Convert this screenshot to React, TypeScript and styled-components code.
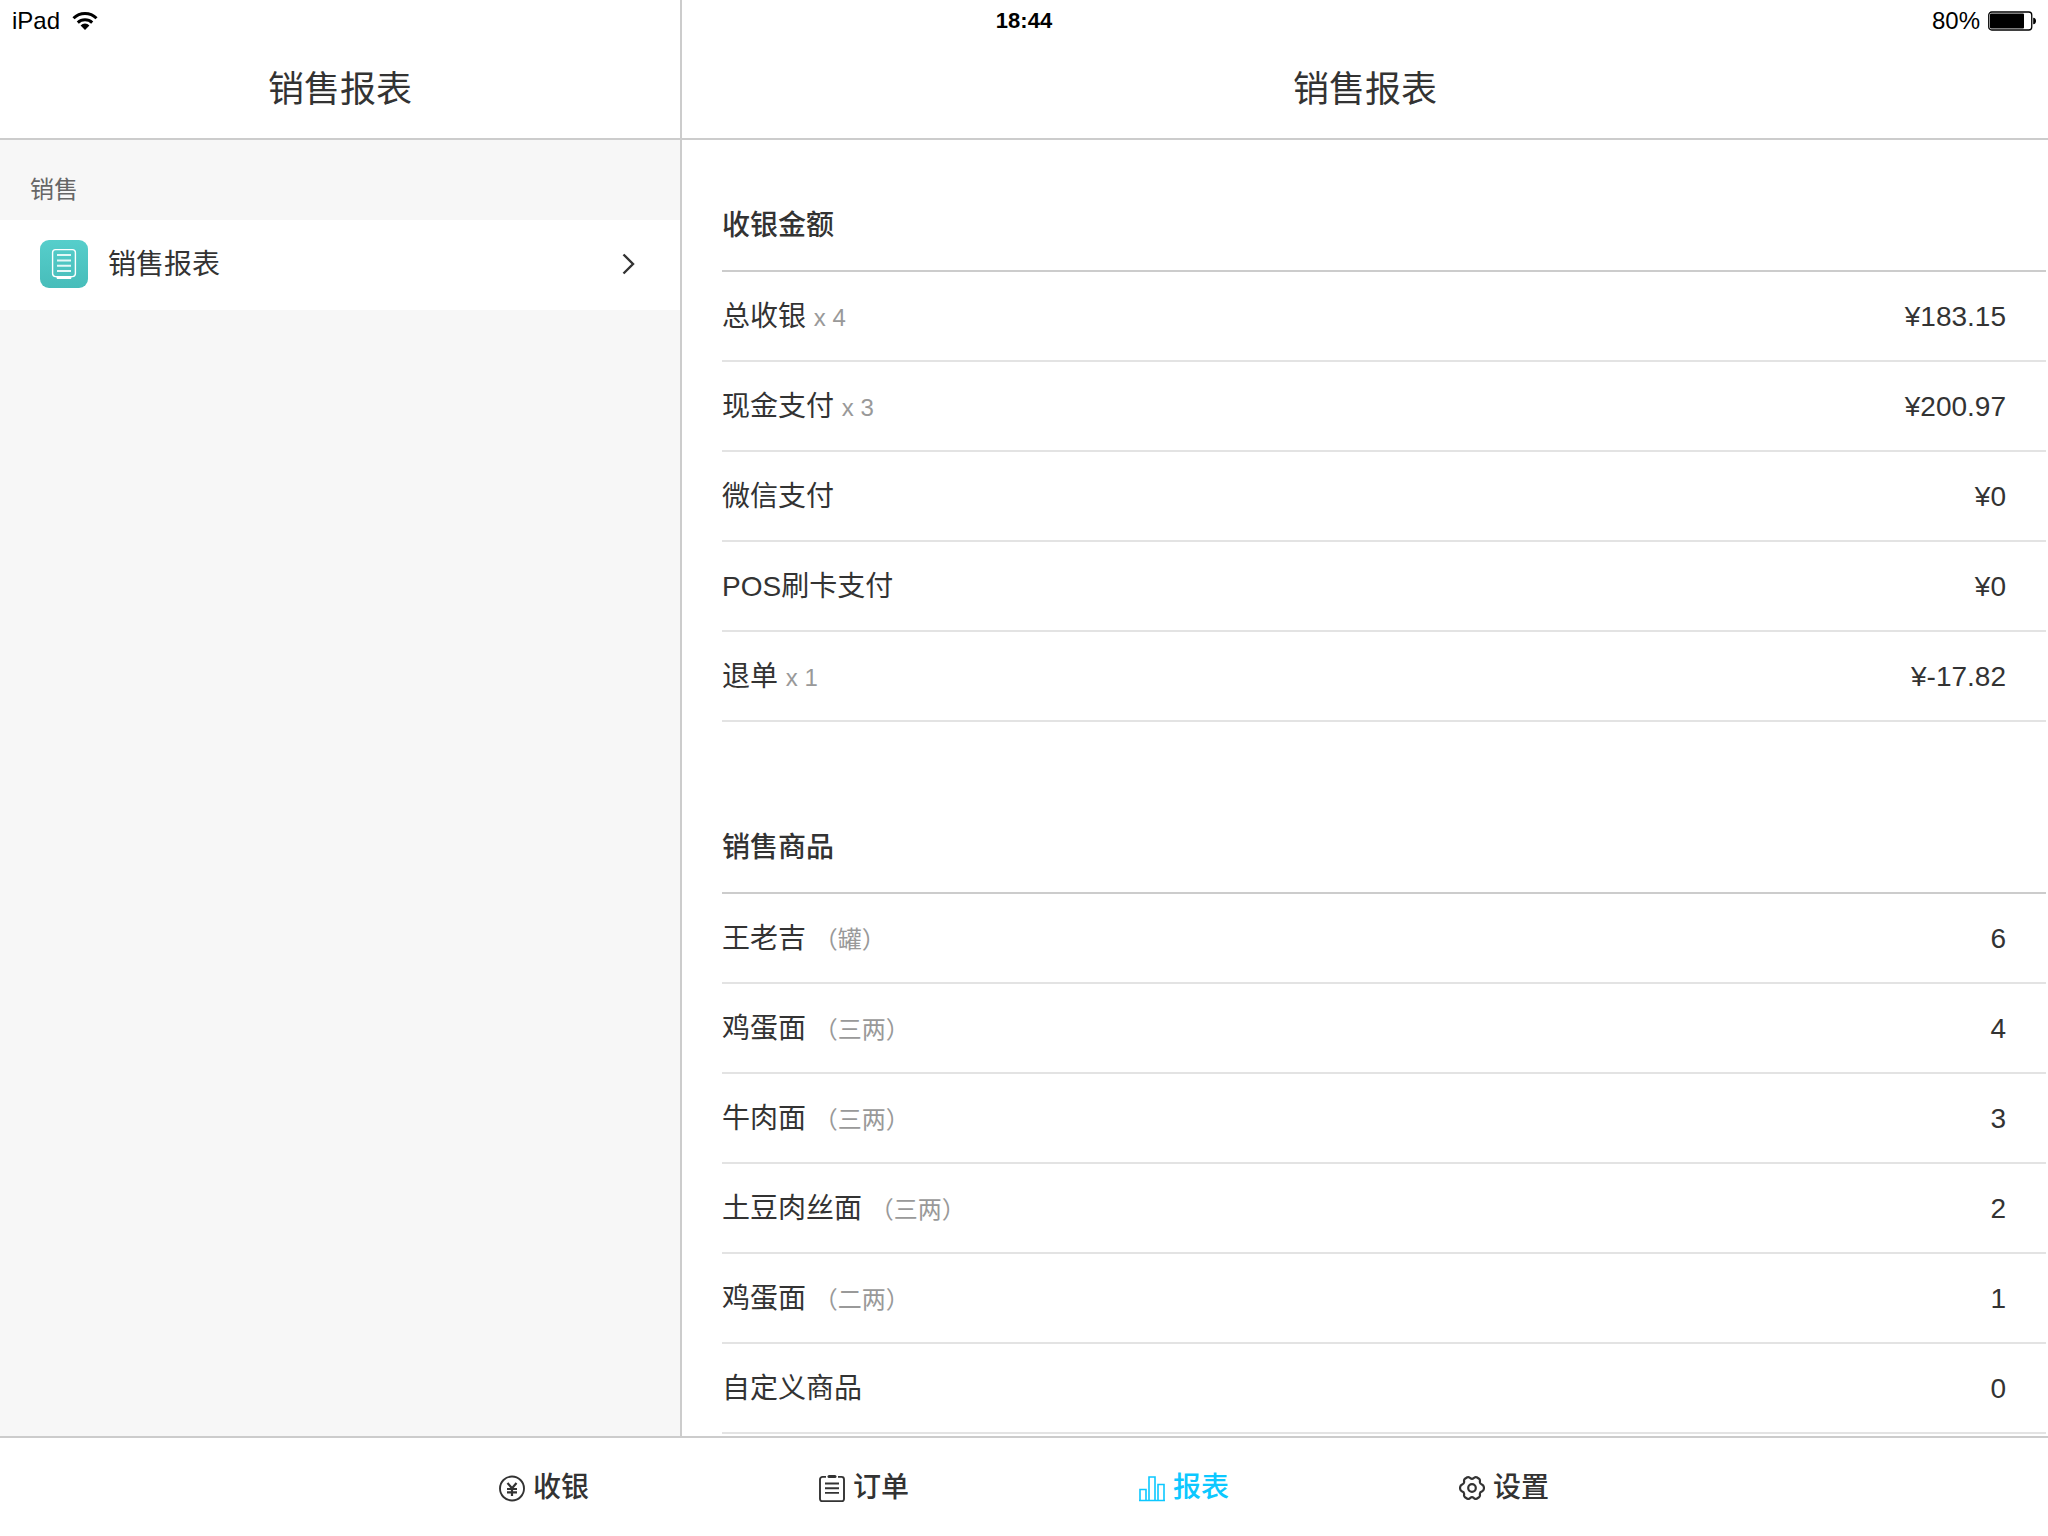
import React from "react";
import styled, { createGlobalStyle } from "styled-components";

const ink = "#333333";
const line = "#cccccc";
const softLine = "#e3e3e3";
const muted = "#999999";
const accent = "#0cc8ff";

const GlobalStyle = createGlobalStyle`
  * { box-sizing: border-box; }
  body {
    margin: 0;
    background: #ffffff;
    color: ${ink};
    font-family: "Liberation Sans", "Noto Sans CJK SC", sans-serif;
    font-size: 28px;
    line-height: 40px;
  }
`;

const Screen = styled.div`
  height: 100vh;
  display: flex;
  flex-direction: column;
  overflow: hidden;
`;

const Columns = styled.div`
  flex: 1;
  min-height: 0;
  display: grid;
  grid-template-columns: 682px minmax(0, 1fr);
`;

const StatusBar = styled.div`
  position: absolute;
  top: 0;
  left: 0;
  right: 0;
  height: 42px;
  padding: 0 12px;
  display: grid;
  grid-template-columns: 1fr auto 1fr;
  align-items: center;
  color: #000000;
  font-size: 24px;
`;

const StatusGroup = styled.div<{ $end?: boolean }>`
  display: flex;
  align-items: center;
  justify-content: ${(p) => (p.$end ? "flex-end" : "flex-start")};
  gap: ${(p) => (p.$end ? "8px" : "12px")};
`;

const Clock = styled.time`
  font-size: 22px;
  font-weight: 700;
`;

const Sidebar = styled.aside`
  display: flex;
  flex-direction: column;
  background: #f7f7f7;
  border-right: 2px solid ${line};
`;

const Pane = styled.main`
  display: flex;
  flex-direction: column;
  min-height: 0;
`;

const TitleBar = styled.header`
  flex: none;
  height: 140px;
  padding-top: 42px;
  display: flex;
  align-items: center;
  justify-content: center;
  background: #ffffff;
  border-bottom: 2px solid ${line};
`;

const Title = styled.h1`
  margin: 0;
  font-size: 36px;
  font-weight: 400;
`;

const GroupLabel = styled.h2`
  margin: 0;
  height: 80px;
  padding: 30px 30px 0;
  color: #666666;
  font-size: 24px;
  font-weight: 400;
`;

const MenuLink = styled.a`
  height: 90px;
  padding: 0 44px 2px 40px;
  display: flex;
  align-items: center;
  gap: 20px;
  background: #ffffff;
  color: ${ink};
  text-decoration: none;
`;

const MenuText = styled.span`
  flex: 1;
  padding-top: 2px;
`;

const Scroll = styled.div`
  flex: 1;
  min-height: 0;
  overflow: hidden;
  padding: 0 2px 0 40px;
`;

const Report = styled.table`
  width: 100%;
  border-collapse: separate;
  border-spacing: 0;
  margin-top: 42px;

  & + & {
    margin-top: 82px;
  }
`;

const Caption = styled.caption`
  height: 90px;
  padding: 24px 0;
  border-bottom: 2px solid ${line};
  text-align: left;
  font-weight: 500;
`;

const Name = styled.th`
  height: 90px;
  padding: 2px 0 0;
  border-bottom: 2px solid ${softLine};
  text-align: left;
  font-weight: 400;
`;

const Value = styled.td`
  height: 90px;
  padding: 2px 40px 0 0;
  border-bottom: 2px solid ${softLine};
  text-align: right;
`;

const Note = styled.span`
  color: ${muted};
  font-size: 24px;
`;

const TabBar = styled.nav`
  flex: none;
  height: 100px;
  display: flex;
  justify-content: center;
  border-top: 2px solid ${line};
`;

const Tab = styled.button<{ $active?: boolean }>`
  width: 320px;
  padding: 2px 0 0;
  border: 0;
  background: none;
  display: flex;
  align-items: center;
  justify-content: center;
  gap: 8px;
  color: ${(p) => (p.$active ? accent : ink)};
  font: inherit;
  font-weight: 500;
`;

const WifiIcon = () => (
  <svg width="26" height="20" viewBox="0 0 26 20" aria-hidden="true">
    <g fill="none" stroke="#000" strokeWidth="3">
      <path d="M1.5 7.2a16.4 16.4 0 0 1 23 0" />
      <path d="M5.8 11.6a10.4 10.4 0 0 1 14.4 0" />
    </g>
    <path d="M13 19l-4.4-4.6a6.3 6.3 0 0 1 8.8 0z" fill="#000" />
  </svg>
);

const BatteryIcon = () => (
  <svg width="48" height="20" viewBox="0 0 48 20" aria-hidden="true">
    <rect x="0.75" y="1" width="43" height="18" rx="3" fill="none" stroke="#000" strokeWidth="1.3" />
    <rect x="2" y="2.6" width="34" height="14.8" rx="1" fill="#000" />
    <path d="M45.200 6.800c2 0 2.800 1.400 2.800 3.200s-.8 3.200-2.800 3.200z" fill="#000" />
  </svg>
);

const ReportIcon = () => (
  <svg width="48" height="48" viewBox="0 0 48 48" aria-hidden="true">
    <defs>
      <linearGradient id="teal" x1="0" y1="0" x2="0" y2="1">
        <stop offset="0" stopColor="#56cecb" />
        <stop offset="1" stopColor="#47bdba" />
      </linearGradient>
    </defs>
    <rect width="48" height="48" rx="9" fill="url(#teal)" />
    <rect x="12.600" y="9.600" width="22.800" height="27" rx="3" fill="none" stroke="#fff" strokeWidth="1.400" />
    <path d="M16 36h16l-1 3H17z" fill="#fff" />
    <path d="M17 15h14M17 20.500h14M17 25.700h14M17 31h14" stroke="#e4f8f7" strokeWidth="2" />
  </svg>
);

const ChevronIcon = () => (
  <svg width="14" height="22" viewBox="0 0 14 22" fill="none" stroke={ink} strokeWidth="2.400" aria-hidden="true">
    <path d="M1.500 1.500L11 11l-9.500 9.500" />
  </svg>
);

const TabIcon = styled.svg.attrs({
  width: 26,
  height: 28,
  viewBox: "0 0 26 28",
  fill: "none",
  stroke: "currentColor",
  "aria-hidden": true,
})``;

const YenIcon = () => (
  <TabIcon strokeWidth="1.900">
    <circle cx="13" cy="14.500" r="12" />
    <path d="M8.500 9l4.500 5.200L17.500 9M13 14v8M8 15h10M8 18.400h10" strokeWidth="2.200" />
  </TabIcon>
);

const OrderIcon = () => (
  <TabIcon strokeWidth="1.900">
    <path d="M7 2.900H3.500a2.500 2.500 0 0 0-2.500 2.500V25a2.200 2.200 0 0 0 2.500 2.200h19A2.200 2.200 0 0 0 25 25V5.400a2.500 2.500 0 0 0-2.500-2.500H19" />
    <path d="M10 2.500h6" strokeWidth="3" strokeLinecap="round" />
    <path d="M6 9.500h14M6 14.200h14M6 18.900h14" />
  </TabIcon>
);

const ChartIcon = () => (
  <TabIcon strokeWidth="1.600">
    <path d="M1 26.500V15.500h6V26.500M10 26.500V3h6v23.500M19 26.500V10.500h6V26.500M0 26.500h26" />
  </TabIcon>
);

const GearIcon = () => (
  <TabIcon strokeWidth="2.200" strokeLinejoin="round">
    <path d="M8.300 3.300Q10.200 2.600 11.300 4.200Q13 5.600 14.700 4.200Q15.800 2.600 17.700 3.300L20 4.700Q21.400 5.800 20.800 8Q20.900 10 23 10.600Q24.900 11.200 25 14Q24.900 16.800 23 17.400Q20.900 18 20.800 20Q21.400 22.200 20 23.300L17.700 24.700Q15.800 25.400 14.700 23.800Q13 22.400 11.300 23.800Q10.200 25.400 8.300 24.700L6 23.300Q4.600 22.200 5.200 20Q5.100 18 3 17.400Q1.100 16.800 1 14Q1.100 11.200 3 10.600Q5.100 10 5.200 8Q4.600 5.800 6 4.700Z" />
    <circle cx="13" cy="14" r="3.800" />
  </TabIcon>
);

type Row = { name: string; note?: string; value: string };

const payments: Row[] = [
  { name: "总收银", note: "x 4", value: "¥183.15" },
  { name: "现金支付", note: "x 3", value: "¥200.97" },
  { name: "微信支付", value: "¥0" },
  { name: "POS刷卡支付", value: "¥0" },
  { name: "退单", note: "x 1", value: "¥-17.82" },
];

const products: Row[] = [
  { name: "王老吉", note: "（罐）", value: "6" },
  { name: "鸡蛋面", note: "（三两）", value: "4" },
  { name: "牛肉面", note: "（三两）", value: "3" },
  { name: "土豆肉丝面", note: "（三两）", value: "2" },
  { name: "鸡蛋面", note: "（二两）", value: "1" },
  { name: "自定义商品", value: "0" },
];

const tabs = [
  { label: "收银", Icon: YenIcon },
  { label: "订单", Icon: OrderIcon },
  { label: "报表", Icon: ChartIcon, active: true },
  { label: "设置", Icon: GearIcon },
];

const ReportTable = ({ title, rows }: { title: string; rows: Row[] }) => (
  <Report>
    <Caption>{title}</Caption>
    <tbody>
      {rows.map((row) => (
        <tr key={row.name + (row.note ?? "")}>
          <Name scope="row">
            {row.name} {row.note && <Note>{row.note}</Note>}
          </Name>
          <Value>{row.value}</Value>
        </tr>
      ))}
    </tbody>
  </Report>
);

export default function App() {
  return (
    <Screen lang="zh-CN">
      <GlobalStyle />
      <Columns>
        <Sidebar>
          <TitleBar>
            <Title>销售报表</Title>
          </TitleBar>
          <GroupLabel>销售</GroupLabel>
          <MenuLink href="#report">
            <ReportIcon />
            <MenuText>销售报表</MenuText>
            <ChevronIcon />
          </MenuLink>
        </Sidebar>
        <Pane>
          <TitleBar>
            <Title>销售报表</Title>
          </TitleBar>
          <Scroll>
            <ReportTable title="收银金额" rows={payments} />
            <ReportTable title="销售商品" rows={products} />
          </Scroll>
        </Pane>
      </Columns>
      <TabBar>
        {tabs.map(({ label, Icon, active }) => (
          <Tab key={label} type="button" $active={active}>
            <Icon />
            {label}
          </Tab>
        ))}
      </TabBar>
      <StatusBar>
        <StatusGroup>
          iPad
          <WifiIcon />
        </StatusGroup>
        <Clock>18:44</Clock>
        <StatusGroup $end>
          80%
          <BatteryIcon />
        </StatusGroup>
      </StatusBar>
    </Screen>
  );
}
